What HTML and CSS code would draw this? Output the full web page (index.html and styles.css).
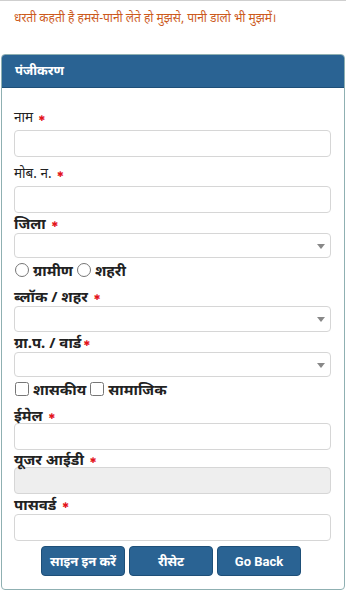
FILE: index.html
```html
<!DOCTYPE html>
<html lang="hi">
<head>
<meta charset="utf-8">
<title>पंजीकरण</title>
<link rel="stylesheet" href="styles.css">
</head>
<body>
<div class="topline"></div>
<p class="tagline">धरती कहती है हमसे-पानी लेते हो मुझसे, पानी डालो भी मुझमें।</p>
<div class="panel">
  <div class="panel-head">पंजीकरण</div>
  <div class="panel-body">
    <label class="lbl lbl-n">नाम <span class="req">✱</span></label>
    <input class="ctl ctl-a" type="text">
    <label class="lbl lbl-n">मोब. न. <span class="req">✱</span></label>
    <input class="ctl" type="text">

    <label class="lbl lbl-b mt2">जिला <span class="req">✱</span></label>
    <div class="sel"><select class="ctl ctl-s"><option></option></select></div>
    <div class="opts">
      <label class="opt"><input type="radio" name="area">ग्रामीण</label>
      <label class="opt"><input type="radio" name="area">शहरी</label>
    </div>

    <label class="lbl lbl-b mt6">ब्लॉक / शहर <span class="req">✱</span></label>
    <div class="sel"><select class="ctl ctl-s2"><option></option></select></div>
    <label class="lbl lbl-b mt2">ग्रा.प. / वार्ड<span class="req">✱</span></label>
    <div class="sel"><select class="ctl ctl-s"><option></option></select></div>
    <div class="opts">
      <label class="opt"><input type="checkbox">शासकीय</label>
      <label class="opt"><input type="checkbox">सामाजिक</label>
    </div>

    <label class="lbl lbl-b mt6 mb0">ईमेल <span class="req">✱</span></label>
    <input class="ctl" type="text">
    <label class="lbl lbl-b mt1 mb0">यूजर आईडी <span class="req">✱</span></label>
    <input class="ctl ctl-ro" type="text" readonly>
    <label class="lbl lbl-b mt1">पासवर्ड <span class="req">✱</span></label>
    <input class="ctl" type="password">

    <div class="btns">
      <button class="btn" type="button">साइन इन करें</button>
      <button class="btn" type="button">रीसेट</button>
      <button class="btn" type="button">Go Back</button>
    </div>
  </div>
</div>
</body>
</html>
```

FILE: styles.css
```css
* { box-sizing: border-box; }
html, body { margin: 0; padding: 0; background: #fff; }
body {
  font-family: "Noto Sans", "Liberation Sans", sans-serif;
  color: #222;
  width: 346px;
}
.topline { height: 1px; background: #cfcfcf; }
.tagline {
  margin: 0;
  padding: 8px 0 0 14px;
  height: 53px;
  overflow: hidden;
  font-size: 12px;
  line-height: 18px;
  color: #cc5a1c;
}
.panel {
  margin: 0 1px;
  border: 1px solid #8fb0b2;
  border-radius: 4px;
  overflow: hidden;
}
.panel-head {
  background: #2a6393;
  color: #fff;
  font-weight: bold;
  font-size: 13px;
  height: 33px;
  line-height: 30px;
  padding-left: 13px;
  border-bottom: 1px solid #1e4f78;
  overflow: hidden;
}
.panel-body {
  padding: 20px 13px 13px 12px;
}
.lbl { display: flex; align-items: center; white-space: pre; }
.lbl-n {
  font-size: 13.5px;
  height: 18px;
  margin-bottom: 4px;
}
.lbl-b {
  font-size: 15px;
  font-weight: bold;
  height: 16px;
  margin-bottom: 2px;
}
.mt1 { margin-top: 1px; }
.mt2 { margin-top: 2px; }
.mt6 { margin-top: 6px; }
.mt7 { margin-top: 7px; }
.mb0 { margin-bottom: 0; }
.req {
  color: #e3141c;
  font-family: "DejaVu Sans", sans-serif;
  font-weight: normal;
  font-size: 8px;
  margin-left: 2px;
  position: relative;
  top: 1px;
}
.ctl {
  display: block;
  width: 100%;
  height: 27px;
  border: 1px solid #d6d6d6;
  border-radius: 4px;
  background: #fff;
  font: inherit;
  margin: 0;
  padding: 0 8px;
}
.ctl-a { margin-bottom: 7px; }
.ctl-ro { background: #eeeeee; margin-bottom: 2px; }
.sel { position: relative; }
.ctl-s, .ctl-s2 { appearance: none; -webkit-appearance: none; height: 25px; }
.ctl-s2 { height: 26px; }
.sel::after {
  content: "";
  position: absolute;
  right: 6px;
  top: 50%;
  margin-top: -2px;
  border-left: 4px solid transparent;
  border-right: 4px solid transparent;
  border-top: 5px solid #888;
}
.opts {
  display: flex;
  align-items: center;
  height: 24px;
  overflow: hidden;
}
.opt {
  display: flex;
  align-items: center;
  font-size: 15px;
  font-weight: bold;
  margin-right: 3px;
}
.opt input { margin: 0 4px 0 1px; width: 14px; height: 14px; }
.btns {
  display: flex;
  justify-content: center;
  gap: 4px;
  margin-top: 5px;
  padding-right: 3px;
}
.btn {
  width: 84px;
  height: 30px;
  background: #2a6393;
  color: #fff;
  border: 1px solid #1e4f78;
  border-radius: 4px;
  font-family: Roboto, "Noto Sans", sans-serif;
  font-weight: bold;
  font-size: 13px;
  padding: 0;
}
```
